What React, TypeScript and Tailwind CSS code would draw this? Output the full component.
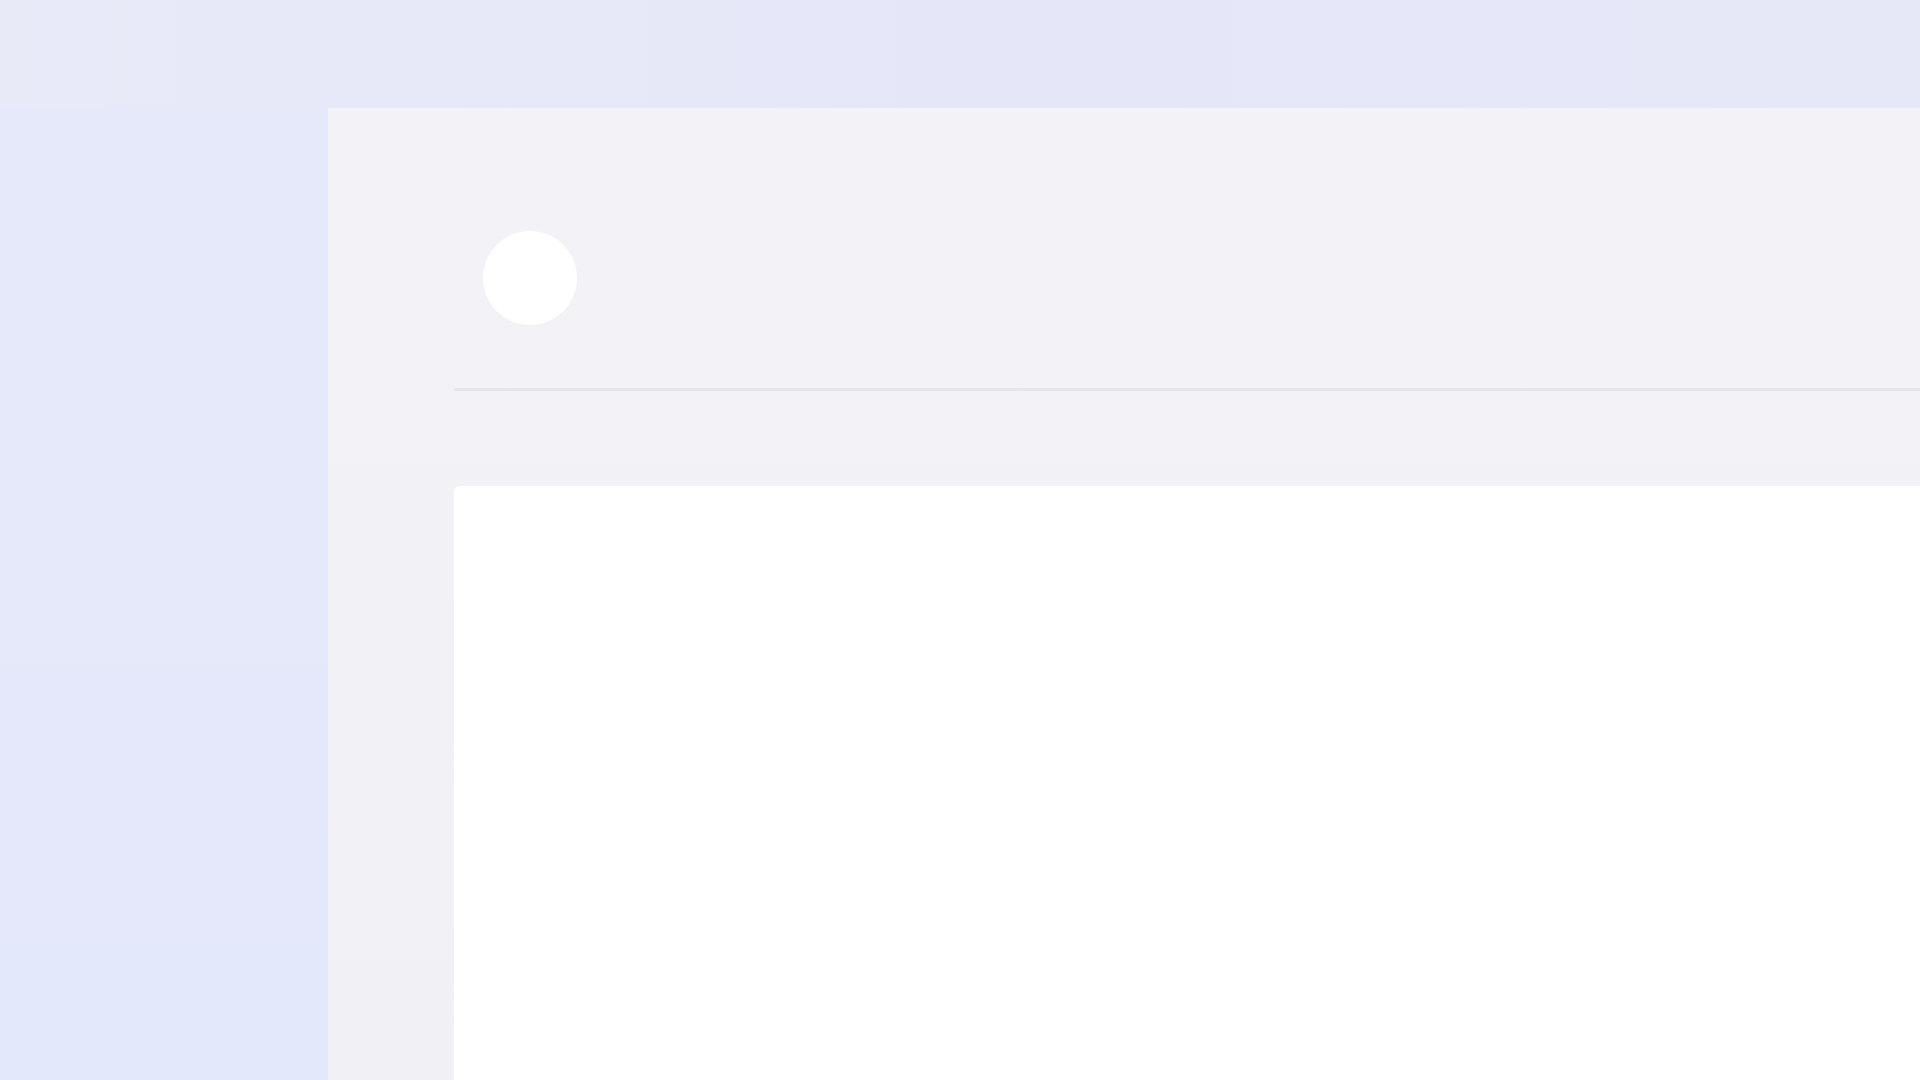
export default function App() {
	return (
		<div className="flex h-screen w-full flex-col overflow-hidden bg-gradient-to-b from-[#e9eaf8] to-[#e3e7fa]">
			<div className="h-[108px] shrink-0 bg-gradient-to-r from-[#e9eaf8] via-[#e5e6f7] to-[#e6e8f8]" />
			<div className="flex flex-1 overflow-hidden">
				<aside className="w-[328px] shrink-0 bg-gradient-to-b from-[#e6e9f9] to-[#e3e8fa]" />
				<main className="flex flex-1 flex-col bg-gradient-to-b from-[#f3f3f7] to-[#f1f0f5] pl-[126px] pt-[123px]">
					<header className="flex shrink-0 items-center pl-[29px]">
						<div className="h-[94px] w-[94px] rounded-full bg-white" />
					</header>
					<div className="mt-[63px] h-[3px] shrink-0 bg-[#e6e6ea]" />
					<section className="mt-[95px] flex-1 rounded-tl-md bg-white" />
				</main>
			</div>
		</div>
	);
}
